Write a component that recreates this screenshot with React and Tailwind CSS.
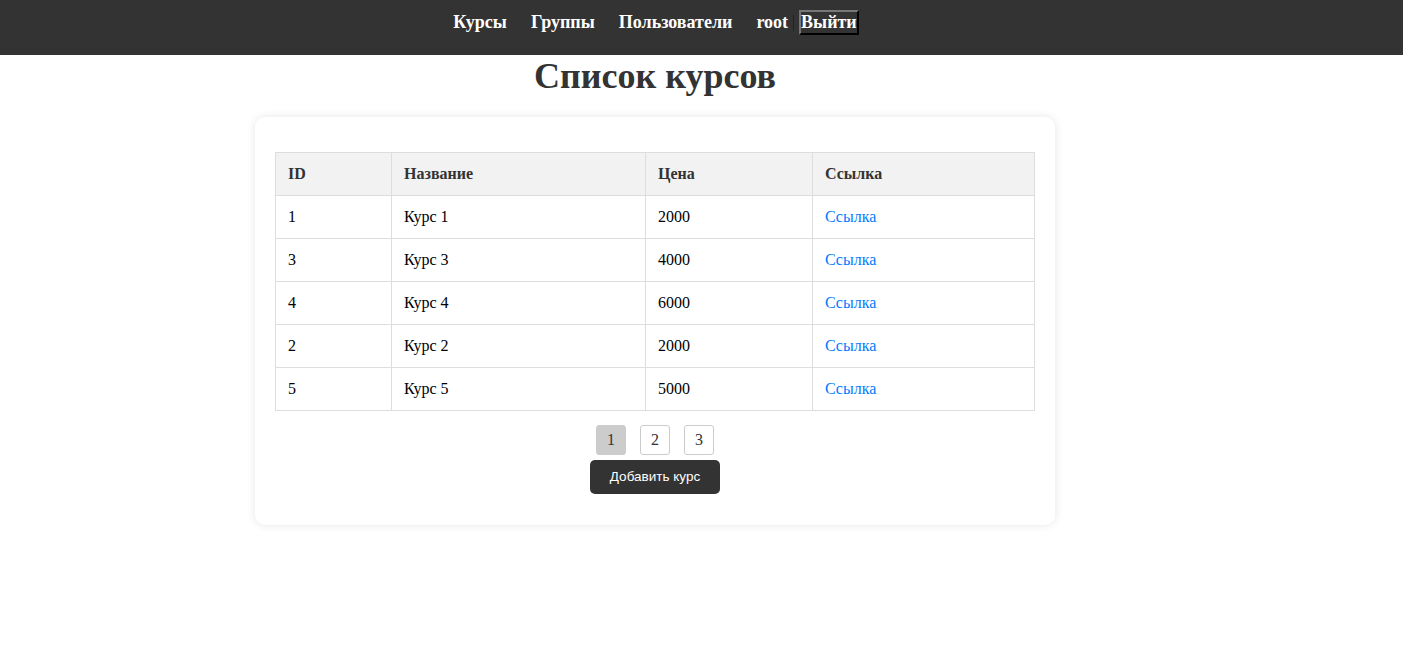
export default function App() {
  const rows = [
    { id: 1, name: "Курс 1", price: 2000 },
    { id: 3, name: "Курс 3", price: 4000 },
    { id: 4, name: "Курс 4", price: 6000 },
    { id: 2, name: "Курс 2", price: 2000 },
    { id: 5, name: "Курс 5", price: 5000 },
  ];
  const serif = { fontFamily: '"Liberation Serif", "Times New Roman", serif' };
  return (
    <div className="min-h-[654px] bg-white text-[16px]" style={serif}>
      <nav className="h-[55px] w-full bg-[#333333]">
        <div className="flex h-full w-[1300px] items-start justify-center pt-[10px]">
          <a className="mx-[12px] mt-[1px] font-bold text-[18px] text-white leading-[22px]">Курсы</a>
          <a className="mx-[12px] mt-[1px] font-bold text-[18px] text-white leading-[22px]">Группы</a>
          <a className="mx-[12px] mt-[1px] font-bold text-[18px] text-white leading-[22px]">Пользователи</a>
          <span className="ml-[12px] mt-[1px] font-bold text-[18px] text-white leading-[22px]">root</span>
          <span className="ml-[5px] mr-[5px] mt-[5px] h-[16px] w-[1px] bg-[#222]"></span>
          <button
            className="h-[25px] px-0 border-2 border-t-[#777] border-l-[#777] border-b-black border-r-black bg-[#333333] font-bold text-[18px] text-white leading-[19px]"
            style={serif}
          >
            Выйти
          </button>
        </div>
      </nav>
      <div className="flex w-[1310px] flex-col items-center">
        <h1 className="mt-0 text-[36px] font-bold leading-[42px] text-[#333333]">Список курсов</h1>
        <div className="mt-[20px] w-[800px] rounded-[10px] bg-white px-[20px] pt-[35px] pb-[31px] shadow-[0_0_10px_rgba(0,0,0,0.1)]">
          <table className="w-full border-collapse text-left">
            <thead>
              <tr className="bg-[#f2f2f2] text-[#333333]">
                <th className="w-[116px] border border-[#dddddd] px-[12px] py-[12px] font-bold leading-[18px]">ID</th>
                <th className="w-[254px] border border-[#dddddd] px-[12px] py-[12px] font-bold leading-[18px]">Название</th>
                <th className="w-[167px] border border-[#dddddd] px-[12px] py-[12px] font-bold leading-[18px]">Цена</th>
                <th className="border border-[#dddddd] px-[12px] py-[12px] font-bold leading-[18px]">Ссылка</th>
              </tr>
            </thead>
            <tbody>
              {rows.map((r) => (
                <tr key={r.id} className="text-black">
                  <td className="border border-[#dddddd] px-[12px] py-[12px] leading-[18px]">{r.id}</td>
                  <td className="border border-[#dddddd] px-[12px] py-[12px] leading-[18px]">{r.name}</td>
                  <td className="border border-[#dddddd] px-[12px] py-[12px] leading-[18px]">{r.price}</td>
                  <td className="border border-[#dddddd] px-[12px] py-[12px] leading-[18px]">
                    <a className="text-[#007bff]">Ссылка</a>
                  </td>
                </tr>
              ))}
            </tbody>
          </table>
          <div className="mt-[14px] flex justify-center gap-[14px]">
            <button className="h-[30px] w-[30px] rounded-[3px] border border-[#cccccc] bg-[#cccccc] text-[16px] text-[#333]" style={serif}>1</button>
            <button className="h-[30px] w-[30px] rounded-[3px] border border-[#cccccc] bg-white text-[16px] text-[#333]" style={serif}>2</button>
            <button className="h-[30px] w-[30px] rounded-[3px] border border-[#cccccc] bg-white text-[16px] text-[#333]" style={serif}>3</button>
          </div>
          <div className="mt-[5px] flex justify-center">
            <button
              className="h-[34px] w-[130px] rounded-[5px] bg-[#333333] text-[13.5px] text-white"
              style={{ fontFamily: '"Liberation Sans", Arial, sans-serif' }}
            >
              Добавить курс
            </button>
          </div>
        </div>
      </div>
    </div>
  );
}
